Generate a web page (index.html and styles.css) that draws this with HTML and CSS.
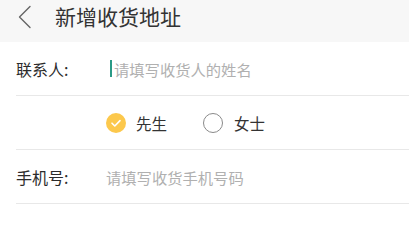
FILE: index.html
```html
<!DOCTYPE html>
<html lang="zh">
<head>
<meta charset="utf-8">
<link rel="stylesheet" href="styles.css">
</head>
<body>
<header class="topbar">
  <svg class="back" width="16" height="24" viewBox="0 0 16 24"><path d="M13 1.5 L2.5 12 L13 22.5" fill="none" stroke="#666" stroke-width="1.4" stroke-linecap="round" stroke-linejoin="round"/></svg>
  <h1 class="title">新增收货地址</h1>
</header>
<main class="form">
  <div class="row">
    <span class="label">联系人:</span>
    <span class="field"><span class="caret"></span><span class="ph">请填写收货人的姓名</span></span>
  </div>
  <div class="row radios">
    <span class="label"></span>
    <span class="opt"><span class="radio on"><svg width="20" height="20" viewBox="0 0 20 20"><path d="M6 10.2 L8.8 13 L14 7.6" fill="none" stroke="#fff" stroke-width="1.6" stroke-linecap="round" stroke-linejoin="round"/></svg></span>先生</span>
    <span class="opt"><span class="radio"></span>女士</span>
  </div>
  <div class="row">
    <span class="label">手机号:</span>
    <span class="field"><span class="ph">请填写收货手机号码</span></span>
  </div>
</main>
</body>
</html>
```
FILE: styles.css
```css
html, body { margin: 0; padding: 0; background: #fff; }
body { font-family: "Noto Sans CJK SC", "Noto Sans", sans-serif; color: #333; }
.topbar { height: 42px; background: #f7f7f7; display: flex; align-items: center; padding-left: 17px; }
.back { display: block; margin-top: -8px; }
.title { margin: -10px 0 0 22px; font-size: 21px; font-weight: 400; color: #333; line-height: 24px; }
.form { padding-left: 16px; }
.row { height: 53px; display: flex; align-items: center; border-bottom: 1px solid #e8e8e8; font-size: 15px; }
.label { width: 90px; flex: none; color: #2b2b2b; font-size: 16px; }
.field { display: flex; align-items: center; }
.caret { width: 2px; height: 17px; background: #2a9a86; margin: 0 2px 0 4px; }
.ph { color: #b0b0b0; font-size: 15.3px; }
.opt { display: flex; align-items: center; color: #333; margin-right: 36px; font-size: 15.5px; }
.radio { width: 20px; height: 20px; border-radius: 50%; border: 1px solid #8a8a8a; margin-right: 11px; box-sizing: border-box; }
.radio.on { border: none; background: #fcc84c; display: flex; align-items: center; justify-content: center; margin-right: 10px; }
.radio.on svg { display: block; }
```
